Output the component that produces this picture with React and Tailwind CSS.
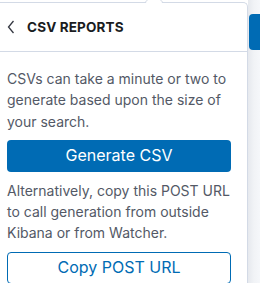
const Chevron = () => (
  <svg width="8" height="14" viewBox="0 0 8 14" className="shrink-0">
    <polyline points="6.5,1 1.5,7 6.5,13" fill="none" stroke="#343741" strokeWidth="1.3" />
  </svg>
)

// little arrow where the popover points up at its anchor
const Notch = () => (
  <svg width="22" height="4" viewBox="0 0 22 4" className="absolute left-[143px] top-[-3px]">
    <polygon points="2,4 5,0 17,0 20,4" fill="#ffffff" />
    <line x1="1.8" y1="2.7" x2="4.6" y2="-0.2" stroke="#d3dae6" strokeWidth="1" />
    <line x1="17.4" y1="-0.2" x2="20.2" y2="2.7" stroke="#d3dae6" strokeWidth="1" />
  </svg>
)

export default function App() {
  return (
    <div className="flex w-[260px] h-[283px] overflow-hidden bg-white font-['Inter',sans-serif]">
      {/* popover panel */}
      <div className="relative w-[248px] shrink-0 mt-[2px] border-t border-r border-[#d3dae6] rounded-tr-[5px] bg-white">
        <Notch />
        <div className="flex items-center h-[49px] pl-[7px] border-b border-[#d3dae6]">
          <Chevron />
          <span className="ml-[12px] text-[13.5px] font-bold text-[#1a1c21] tracking-[0.15px]">CSV REPORTS</span>
        </div>
        <div className="flex flex-col pl-[7px] pr-[16px] pt-[16px] text-[14px] leading-[21.3px] text-[#535966]">
          <p>CSVs can take a minute or two to generate based upon the size of your search.</p>
          <button className="mt-[8px] h-[32px] w-full rounded-[4px] bg-[#006bb4] text-white text-[16px]">
            Generate CSV
          </button>
          <p className="mt-[8px]">
            Alternatively, copy this POST URL to call generation from outside Kibana or from Watcher.
          </p>
          <button className="mt-[8px] h-[32px] w-full rounded-[4px] border border-[#006bb4] bg-white text-[#006bb4] text-[16px]">
            Copy POST URL
          </button>
        </div>
      </div>
      {/* page behind */}
      <div className="flex-1 bg-gradient-to-r from-[#e6e9ee] via-[#f1f3f6] to-[#f5f7fa] pt-[14px] pl-[1px]">
        <div className="h-[36px] rounded-l-[4px] bg-[#006bb4]" />
      </div>
    </div>
  )
}
